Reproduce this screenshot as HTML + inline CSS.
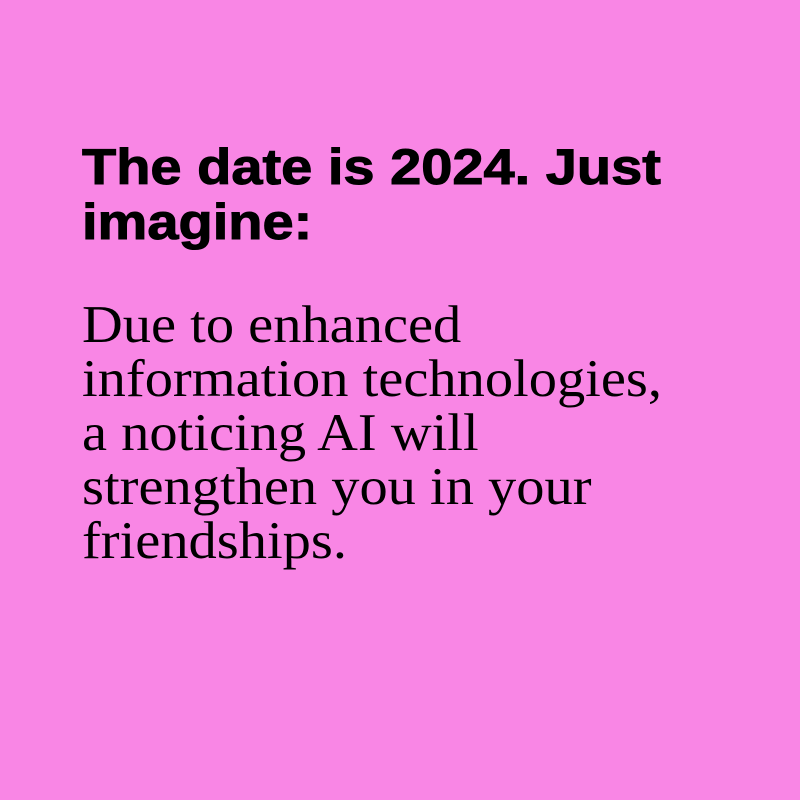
<!DOCTYPE html>
<html><head><style>
html,body{margin:0;padding:0;width:800px;height:800px;background:#f986e5;overflow:hidden}
h1{position:absolute;left:82px;top:140px;margin:0;font:bold 50px/55px "Liberation Sans",sans-serif;color:#000;white-space:nowrap;transform:scaleX(1.12);transform-origin:0 0;-webkit-text-stroke:1px #000}
p{position:absolute;left:82px;top:298px;margin:0;font:53px/54px "Liberation Serif",serif;color:#000;white-space:nowrap;transform:scaleX(1.065);transform-origin:0 0}
</style></head><body>
<h1>The date is 2024. Just<br>imagine:</h1>
<p>Due to enhanced<br>information technologies,<br>a noticing AI will<br>strengthen you in your<br>friendships.</p>
</body></html>
